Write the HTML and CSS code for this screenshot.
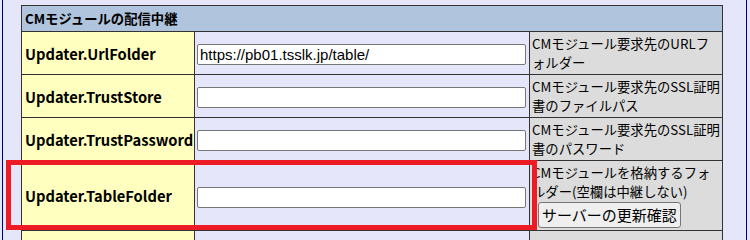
FILE: index.html
```html
<!DOCTYPE html>
<html lang="ja">
<head>
<meta charset="utf-8">
<title>CMモジュールの配信中継</title>
<link rel="stylesheet" href="styles.css">
</head>
<body>
<div class="frame">
  <table class="settings">
    <colgroup>
      <col class="c-label">
      <col class="c-input">
      <col class="c-desc">
    </colgroup>
    <tr class="head">
      <th colspan="3">CMモジュールの配信中継</th>
    </tr>
    <tr>
      <td class="label">Updater.UrlFolder</td>
      <td class="field"><input type="text" value="https://pb01.tsslk.jp/table/"></td>
      <td class="desc">CMモジュール要求先のURLフ<br>ォルダー</td>
    </tr>
    <tr>
      <td class="label">Updater.TrustStore</td>
      <td class="field"><input type="text" value=""></td>
      <td class="desc">CMモジュール要求先のSSL証明<br>書のファイルパス</td>
    </tr>
    <tr>
      <td class="label">Updater.TrustPassword</td>
      <td class="field"><input type="text" value=""></td>
      <td class="desc">CMモジュール要求先のSSL証明<br>書のパスワード</td>
    </tr>
    <tr>
      <td class="label">Updater.TableFolder</td>
      <td class="field"><input type="text" value=""></td>
      <td class="desc">CMモジュールを格納するフォ<br>ルダー(空欄は中継しない)<br><button type="button">サーバーの更新確認</button></td>
    </tr>
    <tr class="next">
      <td class="label"></td>
      <td class="field"></td>
      <td class="desc"></td>
    </tr>
  </table>
  <div class="highlight"></div>
</div>
</body>
</html>
```
FILE: styles.css
```css
html, body {
  margin: 0;
  padding: 0;
  background: #e6e6fa;
}
body {
  font-family: "Noto Sans CJK JP", "Noto Sans", sans-serif;
  color: #000;
}
.frame {
  position: relative;
  box-sizing: border-box;
  width: 745px;
  margin-left: 2px;
  border-left: 1px solid #000080;
  border-right: 1px solid #000080;
  padding: 5px 0 20px 18px;
}
.settings {
  border-collapse: collapse;
  table-layout: fixed;
  width: 701px;
}
.c-label { width: 173px; }
.c-input { width: 335px; }
.c-desc { width: 193px; }
.settings th,
.settings td {
  border: 1px solid #333;
}
.head th {
  background: #b0c4de;
  text-align: left;
  font-size: 13.33px;
  font-weight: bold;
  height: 25px;
  padding: 0 3px;
}
.label {
  background: #ffffc0;
  font-weight: bold;
  font-size: 14.7px;
  padding: 0 3px;
  vertical-align: middle;
  white-space: nowrap;
}
.field {
  padding: 0 2px;
  vertical-align: middle;
}
.field input {
  box-sizing: border-box;
  width: 329px;
  height: 21px;
  margin: 0;
  padding: 0 2px;
  border: 1px solid #767676;
  border-radius: 2px;
  background: #fff;
  font-family: "Liberation Sans", Arial, sans-serif;
  font-size: 15px;
  color: #000;
}
.desc {
  background: #dcdcdc;
  font-size: 13.33px;
  line-height: 19px;
  padding: 2px 1px 2px 2px;
  vertical-align: middle;
  white-space: nowrap;
  overflow: hidden;
}
.desc button {
  vertical-align: top;
  margin: 1px 0 0 6px;
  padding: 1px 3px;
  font-family: "Noto Sans CJK JP", sans-serif;
  font-size: 15px;
  line-height: 22px;
  background: #efefef;
  border: 1px solid #767676;
  border-radius: 3px;
  color: #000;
}
.next td {
  height: 40px;
}
.highlight {
  position: absolute;
  left: 3px;
  top: 160px;
  width: 531px;
  height: 70px;
  box-sizing: border-box;
  border: 5px solid #ed1c24;
}
```
